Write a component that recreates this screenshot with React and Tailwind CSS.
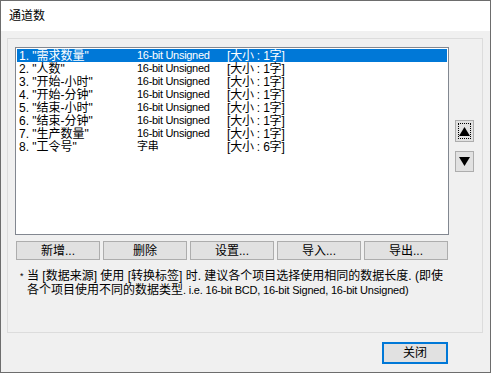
import React from 'react';

const rows = [
  { name: '1. "需求数量"', type: '16-bit Unsigned', size: '[大小 : 1字]' },
  { name: '2. "人数"', type: '16-bit Unsigned', size: '[大小 : 1字]' },
  { name: '3. "开始-小时"', type: '16-bit Unsigned', size: '[大小 : 1字]' },
  { name: '4. "开始-分钟"', type: '16-bit Unsigned', size: '[大小 : 1字]' },
  { name: '5. "结束-小时"', type: '16-bit Unsigned', size: '[大小 : 1字]' },
  { name: '6. "结束-分钟"', type: '16-bit Unsigned', size: '[大小 : 1字]' },
  { name: '7. "生产数量"', type: '16-bit Unsigned', size: '[大小 : 1字]' },
  { name: '8. "工令号"', type: '字串', size: '[大小 : 6字]' },
];

const buttons = ['新增...', '删除', '设置...', '导入...', '导出...'];

const font = { fontFamily: '"Liberation Sans", "Noto Sans CJK SC", sans-serif' };

const App = () => {
  return (
    <div
      className="w-[491px] h-[373px] flex flex-col border border-[#6d6d6d] bg-[#f0f0f0] text-black overflow-hidden"
      style={font}
    >
      {/* Title */}
      <div className="h-[30px] shrink-0 bg-white flex items-center pl-2 text-[12px] leading-none">
        通道数
      </div>

      {/* Body */}
      <div className="flex-1 flex flex-col pl-[6px] pt-[7px]">
        <div className="w-[476px] h-[295px] border border-[#dcdcdc] flex flex-col pl-[7px] pt-[8px]">
          <div className="flex">
            {/* Listbox */}
            <div className="w-[434px] h-[188px] bg-white border border-[#828790] p-px">
              {rows.map((r, i) => (
                <div
                  key={i}
                  className={
                    'h-[13px] flex items-center text-[12px] leading-none ' +
                    (i === 0 ? 'bg-[#0078d7] text-white' : 'text-black')
                  }
                >
                  <span className="w-[120px] pl-[2px] whitespace-nowrap">{r.name}</span>
                  <span className="w-[90px] whitespace-nowrap text-[11px] tracking-[-0.3px]">{r.type}</span>
                  <span className="whitespace-nowrap tracking-[-0.2px]">{r.size}</span>
                </div>
              ))}
            </div>

            {/* Up / Down */}
            <div className="flex flex-col gap-[9px] pl-[6px] pt-[73px]">
              <button className="w-[19px] h-[22px] bg-[#e1e1e1] border border-[#adadad] flex items-center justify-center p-[2px]">
                <span className="w-full h-full border border-dotted border-black flex items-center justify-center">
                  <svg width="11" height="9" viewBox="0 0 11 9">
                    <polygon points="5.5,0 11,9 0,9" fill="#000" />
                  </svg>
                </span>
              </button>
              <button className="w-[19px] h-[21px] bg-[#e1e1e1] border border-[#adadad] flex items-center justify-center">
                <svg width="11" height="9" viewBox="0 0 11 9">
                  <polygon points="0,0 11,0 5.5,9" fill="#000" />
                </svg>
              </button>
            </div>
          </div>

          {/* Buttons row */}
          <div className="flex gap-[3px] mt-[6px] ml-px">
            {buttons.map((b) => (
              <button
                key={b}
                className="w-[84px] h-[19px] bg-[#e1e1e1] border border-[#adadad] text-[12px] leading-none flex items-center justify-center"
              >
                {b}
              </button>
            ))}
          </div>

          {/* Note */}
          <div className="flex mt-[10px] text-[12px] leading-[13px] pl-[5px]">
            <span className="w-[7px] text-[9px] leading-[12px]">*</span>
            <div className="whitespace-nowrap">
              <div className="h-[14px]">当 [数据来源] 使用 [转换标签] 时. 建议各个项目选择使用相同的数据长度. (即使</div>
              <div className="h-[14px]">
                各个项目使用不同的数据类型
                <span className="text-[11px] tracking-[-0.2px]">. i.e. 16-bit BCD, 16-bit Signed, 16-bit Unsigned)</span>
              </div>
            </div>
          </div>
        </div>

        {/* Footer */}
        <div className="flex justify-end pr-[42px] pt-[9px]">
          <button className="w-[66px] h-[22px] bg-[#e1e1e1] border-2 border-[#0078d7] text-[12px] leading-none flex items-center justify-center">
            关闭
          </button>
        </div>
      </div>
    </div>
  );
};

export default App;
